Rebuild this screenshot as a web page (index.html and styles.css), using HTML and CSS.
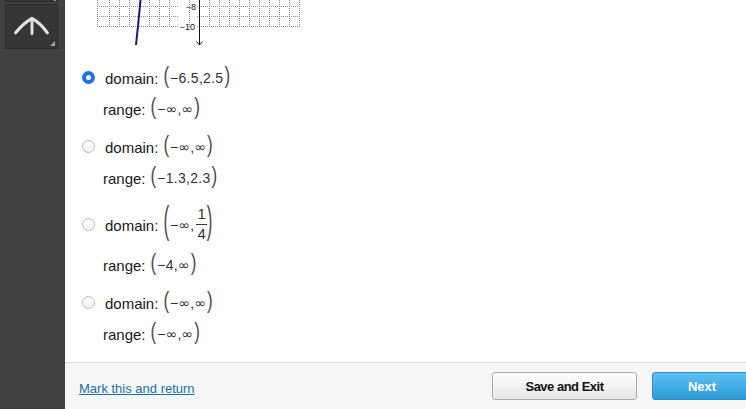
FILE: index.html
```html
<!DOCTYPE html>
<html lang="en">
<head>
<meta charset="utf-8">
<title>Domain and range</title>
<link rel="stylesheet" href="styles.css">
</head>
<body>
<div class="app">
  <aside class="sidebar">
    <div class="nav-stub"></div>
    <button class="nav-btn" type="button" aria-label="Collapse">
      <svg width="53" height="44" viewBox="0 0 53 44">
        <path d="M10 28 Q18 18 27 13 Q36 18 43 28" fill="none" stroke="#e2e2e2" stroke-width="3.2" stroke-linecap="round" stroke-linejoin="round"/>
        <path d="M27 14 L27 29" stroke="#e2e2e2" stroke-width="3" stroke-linecap="round"/>
      </svg>
    </button>
  </aside>
  <main class="main">
    <div class="content">
      <svg class="graph" width="215" height="48" viewBox="0 0 215 48">
        <g stroke="#8a8a8a" stroke-width="1" stroke-dasharray="1 1">
          <line x1="2" y1="-3.5" x2="205" y2="-3.5"/>
          <line x1="2" y1="6.5" x2="205" y2="6.5"/>
          <line x1="2" y1="16.5" x2="205" y2="16.5"/>
          <line x1="2" y1="26.5" x2="205" y2="26.5"/>
          <line x1="2.5" y1="0" x2="2.5" y2="27"/>
          <line x1="14.5" y1="0" x2="14.5" y2="27"/>
          <line x1="24.5" y1="0" x2="24.5" y2="27"/>
          <line x1="34.5" y1="0" x2="34.5" y2="27"/>
          <line x1="54.5" y1="0" x2="54.5" y2="27"/>
          <line x1="64.5" y1="0" x2="64.5" y2="27"/>
          <line x1="74.5" y1="0" x2="74.5" y2="27"/>
          <line x1="84.5" y1="0" x2="84.5" y2="27"/>
          <line x1="114.5" y1="0" x2="114.5" y2="27"/>
          <line x1="124.5" y1="0" x2="124.5" y2="27"/>
          <line x1="134.5" y1="0" x2="134.5" y2="27"/>
          <line x1="144.5" y1="0" x2="144.5" y2="27"/>
          <line x1="154.5" y1="0" x2="154.5" y2="27"/>
          <line x1="164.5" y1="0" x2="164.5" y2="27"/>
          <line x1="174.5" y1="0" x2="174.5" y2="27"/>
          <line x1="184.5" y1="0" x2="184.5" y2="27"/>
          <line x1="194.5" y1="0" x2="194.5" y2="27"/>
          <line x1="204.5" y1="0" x2="204.5" y2="27"/>
        </g>
        <rect x="84" y="0" width="18" height="27" fill="#fff"/>
        <line x1="94.5" y1="0" x2="94.5" y2="27" stroke="#8a8a8a" stroke-dasharray="1 1"/>
        <line x1="104.5" y1="0" x2="104.5" y2="45" stroke="#111" stroke-width="1"/>
        <path d="M101.5 41.5 L104.5 45 L107.5 41.5" fill="none" stroke="#111" stroke-width="1"/>
        <text x="101" y="10" class="axis-label" text-anchor="end">−8</text>
        <text x="100" y="30" class="axis-label" text-anchor="end">−10</text>
        <path d="M45.5 0 Q43.5 22 41 45" fill="none" stroke="#1d1a6e" stroke-width="2"/>
      </svg>

      <div class="options">
        <div class="option">
          <div class="row">
            <span class="radio checked"></span>
            <span class="label">domain:</span>
            <span class="math"><span class="paren">(</span><span class="expr">−6.5,2.5</span><span class="paren">)</span></span>
          </div>
          <div class="row sub">
            <span class="label">range:</span>
            <span class="math"><span class="paren">(</span><span class="expr">−<span class="inf">∞</span>,<span class="inf">∞</span></span><span class="paren">)</span></span>
          </div>
        </div>

        <div class="option">
          <div class="row">
            <span class="radio"></span>
            <span class="label">domain:</span>
            <span class="math"><span class="paren">(</span><span class="expr">−<span class="inf">∞</span>,<span class="inf">∞</span></span><span class="paren">)</span></span>
          </div>
          <div class="row sub">
            <span class="label">range:</span>
            <span class="math"><span class="paren">(</span><span class="expr">−1.3,2.3</span><span class="paren">)</span></span>
          </div>
        </div>

        <div class="option">
          <div class="row tall">
            <span class="radio"></span>
            <span class="label">domain:</span>
            <span class="math"><span class="paren big">(</span><span class="expr">−<span class="inf">∞</span>,</span><span class="frac"><span class="num">1</span><span class="den">4</span></span><span class="paren big">)</span></span>
          </div>
          <div class="row sub">
            <span class="label">range:</span>
            <span class="math"><span class="paren">(</span><span class="expr">−4,<span class="inf">∞</span></span><span class="paren">)</span></span>
          </div>
        </div>

        <div class="option">
          <div class="row">
            <span class="radio"></span>
            <span class="label">domain:</span>
            <span class="math"><span class="paren">(</span><span class="expr">−<span class="inf">∞</span>,<span class="inf">∞</span></span><span class="paren">)</span></span>
          </div>
          <div class="row sub">
            <span class="label">range:</span>
            <span class="math"><span class="paren">(</span><span class="expr">−<span class="inf">∞</span>,<span class="inf">∞</span></span><span class="paren">)</span></span>
          </div>
        </div>
      </div>
    </div>

    <footer class="footer">
      <a class="mark-link" href="#">Mark this and return</a>
      <div class="actions">
        <button class="btn btn-save" type="button">Save and Exit</button>
        <button class="btn btn-next" type="button">Next</button>
      </div>
    </footer>
  </main>
</div>
</body>
</html>
```

FILE: styles.css
```css
* { box-sizing: border-box; }

html, body {
  margin: 0;
  padding: 0;
  background: #fff;
}

body {
  font-family: "Liberation Sans", Arial, sans-serif;
  color: #222;
}

.app {
  display: flex;
  width: 746px;
  height: 409px;
  overflow: hidden;
}

/* ---------- sidebar ---------- */
.sidebar {
  width: 65px;
  flex: none;
  background: #414141;
  display: flex;
  flex-direction: column;
  gap: 2px;
  padding: 0 7px 0 5px;
}

.nav-stub {
  position: relative;
  height: 2px;
  background: #343434;
  border-bottom: 1px solid #2c2c2c;
}

.nav-stub::after {
  content: "";
  position: absolute;
  right: 2px;
  bottom: 0;
  border-left: 3px solid transparent;
  border-bottom: 2px solid #9a9a9a;
}

.nav-btn {
  position: relative;
  width: 53px;
  height: 45px;
  padding: 0;
  margin: 0;
  border: 1px solid #2c2c2c;
  background: #363636;
  display: flex;
  align-items: center;
  justify-content: center;
}

.nav-btn svg { display: block; }

.nav-btn::after {
  content: "";
  position: absolute;
  right: 2px;
  bottom: 2px;
  border-left: 5px solid transparent;
  border-bottom: 5px solid #a0a0a0;
}

/* ---------- main ---------- */
.main {
  flex: 1;
  display: flex;
  flex-direction: column;
  min-width: 0;
}

.content {
  flex: 1;
}

.graph {
  display: block;
  margin-left: 30px;
}

.axis-label {
  font-family: "Liberation Sans", Arial, sans-serif;
  font-size: 9px;
  fill: #111;
}

.options {
  margin-top: 17px;
  padding-left: 17px;
  display: flex;
  flex-direction: column;
  gap: 14px;
}

.option {
  display: flex;
  flex-direction: column;
  gap: 7px;
}

.row {
  display: flex;
  align-items: center;
  height: 24px;
}

.row.tall { height: 42px; }

.row.sub { padding-left: 21px; }

.radio {
  width: 13px;
  height: 13px;
  border-radius: 50%;
  border: 1px solid #b9b9b9;
  background: linear-gradient(#fff, #f2f2f2);
  margin-right: 10px;
  flex: none;
}

.radio.checked {
  border: 4px solid #1a73e8;
  background: #fff;
}

.label {
  font-size: 15px;
  color: #1a1a1a;
  position: relative;
  top: 1px;
}

.math {
  display: inline-flex;
  align-items: center;
  margin-left: 5px;
  font-family: "Liberation Sans", Arial, sans-serif;
  font-size: 14px;
  color: #333;
}

.expr {
  position: relative;
  top: 1px;
  padding: 0 1px;
  letter-spacing: 0.3px;
}

.inf {
  font-family: "DejaVu Sans", "Liberation Sans", sans-serif;
  font-size: 14px;
  letter-spacing: 0;
}

.paren {
  display: inline-block;
  font-family: "Liberation Sans", Arial, sans-serif;
  font-size: 17px;
  line-height: 20px;
  height: 20px;
  color: #4a4a4a;
  position: relative;
  top: -1px;
  transform: scaleY(1.38);
}

.paren.big {
  transform: scaleY(2.25);
  top: -2px;
}

.frac {
  display: inline-flex;
  flex-direction: column;
  align-items: center;
  margin-left: 1px;
  font-size: 15px;
  line-height: 16px;
}

.num {
  border-bottom: 1px solid #333;
  padding: 0 1px 2px;
}

.den {
  padding-top: 1px;
}

/* ---------- footer ---------- */
.footer {
  height: 47px;
  flex: none;
  display: flex;
  align-items: center;
  justify-content: space-between;
  padding-left: 14px;
  background: #f6f6f6;
  border-top: 1px solid #dadada;
  overflow: hidden;
}

.mark-link {
  font-size: 13px;
  color: #1b6fa6;
  text-decoration: underline;
  position: relative;
  top: 2px;
}

.actions {
  display: flex;
  gap: 15px;
  margin-right: -6px;
}

.btn {
  height: 28px;
  border-radius: 3px;
  font-family: "Liberation Sans", Arial, sans-serif;
  font-size: 13px;
  font-weight: bold;
  padding: 0;
  margin: 0;
}

.btn-save {
  width: 145px;
  color: #111;
  letter-spacing: -0.5px;
  border: 1px solid #ababab;
  background: linear-gradient(#ffffff, #e6e6e6);
}

.btn-next {
  width: 100px;
  color: #fff;
  border: 1px solid #2f8fcf;
  background: linear-gradient(#5cc0f0, #2d9bdc);
}
```
